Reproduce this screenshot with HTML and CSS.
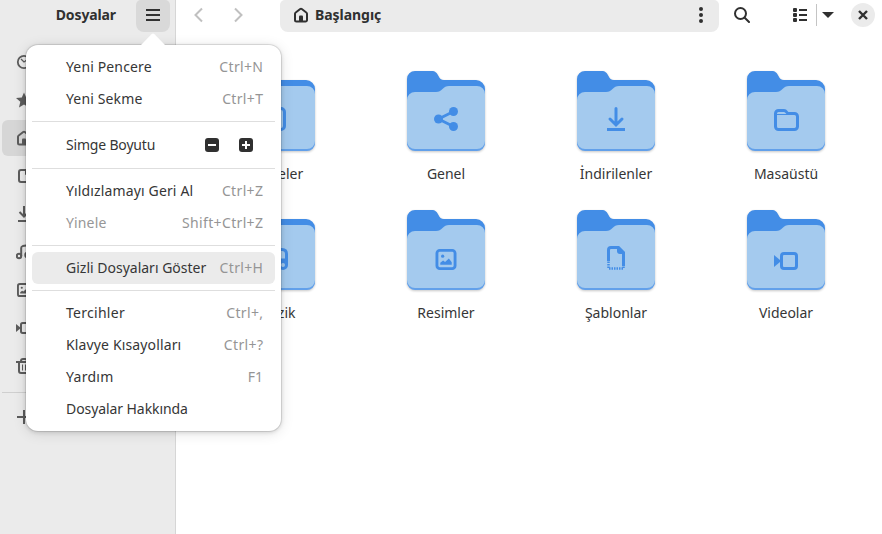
FILE: index.html
```html
<!DOCTYPE html>
<html lang="tr">
<head>
<meta charset="utf-8">
<title>Dosyalar</title>
<link rel="stylesheet" href="styles.css">
</head>
<body>
<svg class="defs" width="0" height="0">
  <defs>
    <symbol id="folder" viewBox="0 0 82 84">
      <path fill="#438de6" d="M2 10a8 8 0 0 1 8-8H26.500c4 0 5.500 2 7 5 1.200 2.500 2.500 4 5.500 4H71a9 9 0 0 1 9 9V73a8 8 0 0 1-8 8H10a8 8 0 0 1-8-8z"/>
      <path fill="#62a0ea" d="M2 60H80V74a8 8 0 0 1-8 8H10a8 8 0 0 1-8-8z"/>
      <path fill="#a4caee" d="M2 31a8 8 0 0 1 8-8H31c3 0 4.500-1 6.500-3 2-2 3.500-3 6.500-3H72a8 8 0 0 1 8 8V72a8 8 0 0 1-8 8H10a8 8 0 0 1-8-8z"/>
    </symbol>
    <symbol id="home" viewBox="0 0 16 16">
      <path fill="none" stroke="currentColor" stroke-width="2" stroke-linejoin="round" d="M2 6.800Q2 6 2.700 5.500L7.200 2q.8-.6 1.600 0l4.500 3.500q.7.500.7 1.300V13a1.500 1.500 0 0 1-1.500 1.500h-9A1.500 1.500 0 0 1 2 13z"/>
      <path fill="currentColor" d="M6 15V9.500A1 1 0 0 1 7 8.500h2a1 1 0 0 1 1 1V15z"/>
    </symbol>
    <symbol id="doc" viewBox="0 0 16 16">
      <path fill="none" stroke="currentColor" stroke-width="2" d="M5 2h5l4 4v6a2 2 0 0 1-2 2H5a2 2 0 0 1-2-2V4a2 2 0 0 1 2-2z"/>
      <path fill="currentColor" d="M9 1v5a1 1 0 0 0 1 1h5z"/>
    </symbol>
    <symbol id="image" viewBox="0 0 22 22">
      <rect x="1.500" y="1.500" width="19" height="19" rx="3" fill="none" stroke="currentColor" stroke-width="3"/>
      <circle cx="7.500" cy="7.500" r="1.700" fill="currentColor"/>
      <path fill="currentColor" d="M5 16.500v-2l3-2.500 2 1.500 4-3.500 3 4v2.500z"/>
    </symbol>
    <symbol id="video" viewBox="0 0 24 18">
      <path fill="currentColor" d="M0 3 6 8v2L0 15z"/>
      <rect x="7.500" y="1.500" width="15" height="15" rx="2.500" fill="none" stroke="currentColor" stroke-width="3"/>
    </symbol>
  </defs>
</svg>

<div class="window">
  <aside class="sidebar">
    <header class="side-header">
      <h1 class="app-title">Dosyalar</h1>
      <button class="menu-button" aria-label="Menü">
        <svg width="16" height="16"><path fill="currentColor" d="M1 2h14v2H1zM1 7h14v2H1zM1 12h14v2H1z"/></svg>
      </button>
    </header>
    <nav class="places">
      <a class="place"><svg width="16" height="16" fill="none" stroke="currentColor"><circle cx="8" cy="8" r="6.200" stroke-width="1.800"/><path stroke-width="1.300" d="m5 5 3 3 3.500-2.500"/></svg></a>
      <a class="place"><svg width="16" height="16"><path fill="currentColor" d="m8 .5 2.200 5 5.800.5-4.300 3.800L13 15.500 8 12.500l-5 3 1.300-5.700L0 6l5.800-.5z"/></svg></a>
      <a class="place place-active"><svg width="16" height="16"><use href="#home"/></svg></a>
      <a class="place"><svg width="16" height="16"><use href="#doc"/></svg></a>
      <a class="place"><svg width="16" height="16"><path fill="none" stroke="currentColor" stroke-width="2" d="M8 0v10M3.500 6 8 10.500 12.500 6M2 15h12"/></svg></a>
      <a class="place"><svg width="16" height="16" fill="none" stroke="currentColor" stroke-width="2"><circle cx="3" cy="12" r="2.200"/><circle cx="11.500" cy="11" r="2.200"/><path d="M5.200 12V4a2 2 0 0 1 1.500-1.900L12 1.200q1.700 0 1.700 1.800v8"/></svg></a>
      <a class="place"><svg width="14" height="14"><use href="#image"/></svg></a>
      <a class="place"><svg width="16" height="12"><use href="#video"/></svg></a>
      <a class="place"><svg width="16" height="16" fill="none" stroke="currentColor" stroke-width="2"><path d="M0 4h16M3 4v9a2 2 0 0 0 2 2h6a2 2 0 0 0 2-2V4M5 4V3a2 2 0 0 1 2-2h2a2 2 0 0 1 2 2v1"/><path stroke-width="1" d="M6.500 6.500v6M9.500 6.500v6"/></svg></a>
      <div class="side-rule"></div>
      <a class="place"><svg width="16" height="16"><path fill="currentColor" d="M7 1h2v6h6v2H9v6H7V9H1V7h6z"/></svg></a>
    </nav>
  </aside>

  <main class="content">
    <header class="toolbar">
      <div class="history">
        <svg width="16" height="16"><path d="M11 1.500 4.500 8l6.500 6.500"/></svg>
        <svg width="16" height="16"><path d="M4 1.500 10.500 8 4 14.500"/></svg>
      </div>
      <div class="pathbar">
        <svg width="16" height="16"><use href="#home"/></svg>
        <span class="path-name">Başlangıç</span>
        <svg class="dots" width="16" height="16" fill="currentColor"><circle cx="8" cy="2" r="2"/><circle cx="8" cy="8" r="2"/><circle cx="8" cy="14" r="2"/></svg>
      </div>
      <div class="tools">
        <svg width="16" height="16"><circle cx="6.500" cy="6.500" r="5.500" fill="none" stroke="currentColor" stroke-width="2"/><path stroke="currentColor" stroke-width="2" stroke-linecap="round" d="m10.700 10.700 4.300 4.300"/></svg>
        <svg class="list-icon" width="16" height="16" fill="currentColor"><rect x="1" y="1" width="4" height="4" rx="1"/><rect x="1" y="6" width="4" height="4" rx="1"/><rect x="1" y="11" width="4" height="4" rx="1"/><path d="M7 2h8v2H7zM7 7h8v2H7zM7 12h8v2H7z"/></svg>
        <span class="tool-rule"></span>
        <svg width="12" height="6"><path fill="currentColor" d="M0 0h12L6 6z"/></svg>
        <button class="close" aria-label="Kapat"><svg width="10" height="10"><path stroke="currentColor" stroke-width="2.400" d="m1 1 8 8M9 1 1 9"/></svg></button>
      </div>
    </header>

    <section class="grid">
      <figure class="item"><svg class="folder" width="82" height="84"><use href="#folder"/><rect x="31.500" y="39.500" width="18" height="21" rx="3.500" fill="none" stroke="currentColor" stroke-width="3"/></svg><figcaption>Belgeler</figcaption></figure>
      <figure class="item"><svg class="folder" width="82" height="84"><use href="#folder"/><g fill="currentColor"><circle cx="33.500" cy="50" r="4.500"/><circle cx="48.500" cy="42.500" r="4.500"/><circle cx="48.500" cy="57.500" r="4.500"/></g><path fill="none" stroke="currentColor" stroke-width="2.800" d="m48.500 42.500-15 7.500 15 7.500"/></svg><figcaption>Genel</figcaption></figure>
      <figure class="item"><svg class="folder" width="82" height="84"><use href="#folder"/><path fill="none" stroke="currentColor" stroke-width="3" stroke-linecap="round" d="M41 39.500v15.500M35 50l6 6 6-6"/><path fill="currentColor" d="M32 59h18v3H32z"/></svg><figcaption>İndirilenler</figcaption></figure>
      <figure class="item"><svg class="folder" width="82" height="84"><use href="#folder"/><path fill="none" stroke="currentColor" stroke-width="3" d="M30.500 46v-1.500a3 3 0 0 1 3-3H39q1.500 0 2.500 1.500t2.500 1.500h5.500a3 3 0 0 1 3 3V57.500a3 3 0 0 1-3 3h-16a3 3 0 0 1-3-3z"/><path stroke="currentColor" d="M31 45.500h13"/></svg><figcaption>Masaüstü</figcaption></figure>
      <figure class="item"><svg class="folder" width="82" height="84"><use href="#folder"/><g fill="none" stroke="currentColor" stroke-width="3"><path d="M36.500 57V46a4.500 4.500 0 0 1 4.500-4.500h6q4.500 0 4.500 4.500V57M37 52h14"/><circle cx="33" cy="57" r="3.500"/><circle cx="48" cy="57" r="3.500"/></g></svg><figcaption>Müzik</figcaption></figure>
      <figure class="item"><svg class="folder" width="82" height="84"><use href="#folder"/><use href="#image" x="30" y="41" width="22" height="21"/></svg><figcaption>Resimler</figcaption></figure>
      <figure class="item"><svg class="folder" width="82" height="84"><use href="#folder"/><path fill="none" stroke="currentColor" stroke-width="3" d="M33.500 53V42a2.500 2.500 0 0 1 2.500-2.500h7l5.500 5.500V58"/><path fill="currentColor" d="M42 38v5a3 3 0 0 0 3 3h5v-2l-6-6z"/><path fill="none" stroke="currentColor" stroke-width="2.500" stroke-dasharray="1.500 1" d="M33.500 53.500V60.500H48.500V57"/></svg><figcaption>Şablonlar</figcaption></figure>
      <figure class="item"><svg class="folder" width="82" height="84"><use href="#folder"/><use href="#video" x="29" y="44" width="24" height="18"/></svg><figcaption>Videolar</figcaption></figure>
    </section>
  </main>
</div>

<div class="popover">
  <svg class="arrow" width="24" height="12"><path fill="#fff" d="M0 12 10.500 1.200q1.500-1.400 3 0L24 12z"/></svg>
  <div class="row"><span class="wide">Yeni Pencere</span><kbd>Ctrl+N</kbd></div>
  <div class="row"><span class="wide">Yeni Sekme</span><kbd>Ctrl+T</kbd></div>
  <hr>
  <div class="row row-size"><span class="narrow">Simge Boyutu</span>
    <div class="zoom">
      <svg width="14" height="14"><rect width="14" height="14" rx="3" fill="#303030"/><path fill="#fff" d="M3 6h8v2H3z"/></svg>
      <svg width="14" height="14"><rect width="14" height="14" rx="3" fill="#303030"/><path fill="#fff" d="M3 6h3V3h2v3h3v2H8v3H6V8H3z"/></svg>
    </div>
  </div>
  <hr>
  <div class="row"><span class="wide">Yıldızlamayı Geri Al</span><kbd>Ctrl+Z</kbd></div>
  <div class="row row-off"><span class="wide">Yinele</span><kbd>Shift+Ctrl+Z</kbd></div>
  <hr>
  <div class="row row-hover"><span>Gizli Dosyaları Göster</span><kbd>Ctrl+H</kbd></div>
  <hr>
  <div class="row"><span class="wider">Tercihler</span><kbd>Ctrl+,</kbd></div>
  <div class="row"><span class="wide">Klavye Kısayolları</span><kbd>Ctrl+?</kbd></div>
  <div class="row"><span class="wider">Yardım</span><kbd class="plain">F1</kbd></div>
  <div class="row"><span class="snug">Dosyalar Hakkında</span></div>
</div>
</body>
</html>
```
FILE: styles.css
```css
* { box-sizing: border-box; }
body { margin: 0; width: 882px; height: 534px; overflow: hidden; background: #fff; color: #303030; font: 14px/20px "Noto Sans", sans-serif; }
svg { display: block; flex: none; }
button { border: 0; padding: 0; color: inherit; display: flex; align-items: center; justify-content: center; }
.defs { position: absolute; }
.window { display: flex; height: 534px; }

.sidebar { width: 176px; flex: none; background: #ebebeb; border-right: 1px solid #d6d6d6; }
.side-header { height: 32px; display: flex; justify-content: flex-end; padding-right: 5px; }
.app-title { margin: 5px 20px 0 0; font-size: 14px; line-height: 20px; font-weight: 700; letter-spacing: -.12px; }
.menu-button { width: 34px; height: 32px; padding-bottom: 2px; background: #d9d9d9; border-radius: 5px 5px 8px 8px; }
.places { padding: 12px 2px 0; color: #5c5c5c; }
.place { display: grid; grid-template-columns: 44px; justify-items: center; align-items: center; height: 36px; margin-bottom: 2px; border-radius: 6px; }
.place-active { background: #d6d6d6; }
.side-rule { height: 1px; margin: 8px -2px 6px 0; background: #cfcfcf; }

.content { flex: 1; min-width: 0; }
.toolbar { height: 32px; display: flex; }
.history { width: 104px; display: flex; gap: 24px; padding: 7px 0 0 15px; fill: none; stroke: #c0c0c0; stroke-width: 2; }
.pathbar { width: 439px; display: flex; align-items: center; padding: 0 10px 2px 13px; background: #ebebeb; border-radius: 5px 5px 8px 8px; }
.path-name { margin-left: 6px; font-weight: 700; letter-spacing: -.05px; }
.dots { margin-left: auto; }
.tools { flex: 1; display: flex; align-items: center; padding: 0 7px 2px 15px; }
.list-icon { margin-left: 42px; }
.tool-rule { width: 1px; height: 22px; margin: 0 5px 0 8px; background: #c4c4c4; }
.close { width: 24px; height: 24px; margin-left: auto; border-radius: 50%; background: #ebebeb; }

.grid { display: grid; grid-template-columns: repeat(4, 170px); grid-auto-rows: 139px; margin: 37px 0 0 15px; }
.item { margin: 0; display: flex; flex-direction: column; align-items: center; color: #438de6; }
.folder { filter: drop-shadow(0 1px 1px rgba(0, 0, 0, .22)); }
figcaption { margin-top: 11px; color: #363636; }

.popover { position: absolute; left: 26px; top: 45px; width: 255px; height: 386px; padding: 6px; color: #363636; background: #fff; border-radius: 12px; box-shadow: 0 0 0 1px rgba(0, 0, 0, .09), 0 1px 4px rgba(0, 0, 0, .16), 0 2px 14px rgba(0, 0, 0, .12); }
.arrow { position: absolute; left: 115px; top: -12px; }
.row { display: flex; align-items: center; justify-content: space-between; height: 32px; padding: 0 12px 0 34px; border-radius: 6px; white-space: nowrap; }
.row-size { height: 34px; padding-right: 22px; }
.row-hover { background: #ebebeb; }
.row-off { color: #979797; }
.wide { letter-spacing: .14px; }
.wider { letter-spacing: .28px; }
.narrow { letter-spacing: -.18px; }
.snug { letter-spacing: -.08px; }
.zoom { display: flex; gap: 20px; }
kbd { font: inherit; color: #959595; letter-spacing: .35px; margin-right: -.35px; }
.plain { letter-spacing: 0; margin-right: 0; }
hr { height: 1px; margin: 6px 0; border: 0; background: #dedede; }
```
